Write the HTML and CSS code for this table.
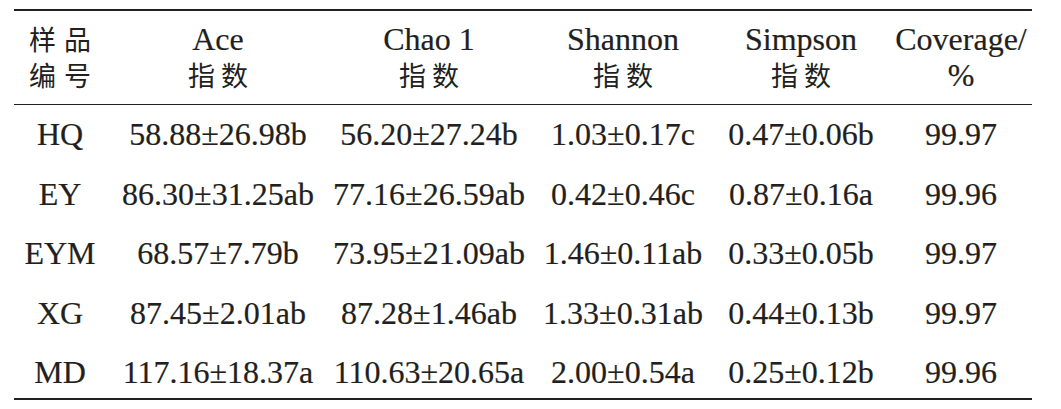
FILE: index.html
```html
<!DOCTYPE html>
<html lang="zh-CN">
<head>
    <meta charset="UTF-8">
    <meta name="viewport" content="width=device-width, initial-scale=1.0">
    <title>多样性指数</title>
    <link rel="stylesheet" href="styles.css">
</head>
<body>
    <table class="diversity">
        <colgroup>
            <col class="c-sample">
            <col class="c-ace">
            <col class="c-chao">
            <col class="c-shannon">
            <col class="c-simpson">
            <col class="c-coverage">
        </colgroup>
        <thead>
            <tr>
                <th><span class="zh wide">样品</span><br><span class="zh wide">编号</span></th>
                <th>Ace<br><span class="zh">指数</span></th>
                <th>Chao 1<br><span class="zh">指数</span></th>
                <th>Shannon<br><span class="zh">指数</span></th>
                <th>Simpson<br><span class="zh">指数</span></th>
                <th class="cov">Coverage/<br>%</th>
            </tr>
        </thead>
        <tbody>
            <tr>
                <td>HQ</td>
                <td>58.88±26.98b</td>
                <td>56.20±27.24b</td>
                <td>1.03±0.17c</td>
                <td>0.47±0.06b</td>
                <td class="cov">99.97</td>
            </tr>
            <tr>
                <td>EY</td>
                <td>86.30±31.25ab</td>
                <td>77.16±26.59ab</td>
                <td>0.42±0.46c</td>
                <td>0.87±0.16a</td>
                <td class="cov">99.96</td>
            </tr>
            <tr>
                <td>EYM</td>
                <td>68.57±7.79b</td>
                <td>73.95±21.09ab</td>
                <td>1.46±0.11ab</td>
                <td>0.33±0.05b</td>
                <td class="cov">99.97</td>
            </tr>
            <tr>
                <td>XG</td>
                <td>87.45±2.01ab</td>
                <td>87.28±1.46ab</td>
                <td>1.33±0.31ab</td>
                <td>0.44±0.13b</td>
                <td class="cov">99.97</td>
            </tr>
            <tr>
                <td>MD</td>
                <td>117.16±18.37a</td>
                <td>110.63±20.65a</td>
                <td>2.00±0.54a</td>
                <td>0.25±0.12b</td>
                <td class="cov">99.96</td>
            </tr>
        </tbody>
    </table>
</body>
</html>
```

FILE: styles.css
```css
body {
    margin: 0;
    padding: 9px 0 0 14px;
    background-color: #fff;
    color: #231f20;
    font-family: "Liberation Serif", "Times New Roman", serif;
    font-size: 32px;
}
.diversity {
    width: 1018px;
    table-layout: fixed;
    border-collapse: collapse;
    border-top: 2px solid #231f20;
    border-bottom: 2px solid #231f20;
}
.c-sample { width: 92px; }
.c-ace { width: 224px; }
.c-chao { width: 198px; }
.c-shannon { width: 190px; }
.c-simpson { width: 166px; }
.c-coverage { width: 148px; }
th, td {
    font-family: "Liberation Serif", "Times New Roman", serif;
    text-align: center;
    white-space: nowrap;
    padding: 0;
    line-height: 36px;
    font-weight: normal;
    -webkit-text-stroke: 0.2px #231f20;
}
th {
    padding: 10px 0 11px;
    border-bottom: 1px solid #231f20;
}
td {
    padding: 11px 0 12.5px;
}
tbody tr:last-child td {
    padding-bottom: 8px;
}
.cov {
    padding-left: 6px;
}
.zh {
    font-family: "Noto Sans CJK SC", sans-serif;
    font-size: 27px;
    letter-spacing: 6px;
    margin-right: -6px;
    -webkit-text-stroke: 0;
}
.zh.wide {
    letter-spacing: 8px;
    margin-right: -8px;
}
```
